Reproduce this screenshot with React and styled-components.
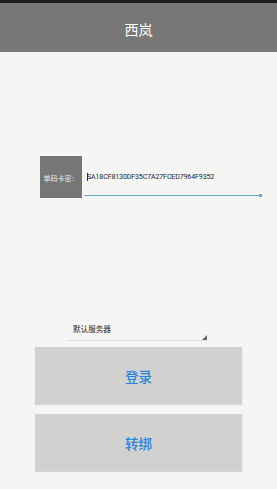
import React from "react";
import styled, { createGlobalStyle } from "styled-components";

const GlobalStyle = createGlobalStyle`
  html, body {
    margin: 0;
    padding: 0;
    background: #f5f5f3;
  }
  body {
    font-family: Roboto, "Noto Sans CJK SC", sans-serif;
  }
`;

const Screen = styled.div`
  width: 277px;
  height: 489px;
  background: #f5f5f3;
  display: flex;
  flex-direction: column;
  overflow: hidden;
`;

const StatusBar = styled.div`
  height: 3px;
  background: #1c1c1b;
`;

const TitleBar = styled.header`
  height: 49px;
  background: #777775;
  color: #ffffff;
  display: flex;
  align-items: center;
  justify-content: center;
  font-size: 14px;
  padding-top: 2px;
  box-sizing: border-box;
`;

const Body = styled.main`
  flex: 1;
  display: flex;
  flex-direction: column;
  padding: 104px 35px 0 35px;
`;

const InputRow = styled.div`
  display: flex;
  align-items: stretch;
  height: 42px;
  margin-left: 5px;
  margin-right: -20px;
`;

const Label = styled.div`
  width: 42px;
  background: #767674;
  color: #ececea;
  font-size: 7px;
  display: flex;
  align-items: center;
  justify-content: center;
  padding-top: 2px;
  box-sizing: border-box;
  white-space: nowrap;
`;

const Field = styled.div`
  flex: 1;
  margin-left: 2px;
  margin-bottom: 2px;
  display: flex;
  align-items: center;
  padding-left: 3px;
  padding-top: 2px;
  border-bottom: 1.5px solid #62a9c6;
  font-size: 7px;
  color: #1e1e1e;
  letter-spacing: -0.1px;
  position: relative;
  &::after {
    content: "";
    position: absolute;
    right: 0;
    bottom: -1.5px;
    width: 3px;
    height: 3px;
    background: #62a9c6;
  }
`;

const Caret = styled.span`
  display: inline-block;
  width: 1px;
  height: 8px;
  background: #333;
  margin-right: -1px;
`;

const Spinner = styled.div`
  margin: 118px 35px 0 33px;
  height: 24px;
  display: flex;
  align-items: center;
  padding-left: 5px;
  font-size: 7.6px;
  color: #222222;
  border-bottom: 1px solid #dcdcda;
  position: relative;
`;

const Arrow = styled.span`
  position: absolute;
  right: 0;
  bottom: 0;
  width: 0;
  height: 0;
  border-left: 5px solid transparent;
  border-bottom: 5px solid #666664;
`;

const ActionButton = styled.button`
  height: ${(p) => p.$h}px;
  margin-top: ${(p) => p.$top}px;
  border: none;
  background: #d1d1cf;
  color: #2684dc;
  font-family: "Noto Sans CJK SC", sans-serif;
  font-size: 13.5px;
  font-weight: 500;
  padding: 0;
  display: flex;
  align-items: center;
  justify-content: center;
  box-shadow: 0 1px 1px rgba(0, 0, 0, 0.12);
`;

export default function App() {
  return (
    <>
      <GlobalStyle />
      <Screen>
        <StatusBar />
        <TitleBar>西岚</TitleBar>
        <Body>
          <InputRow>
            <Label>单码卡密：</Label>
            <Field>
              <Caret />
              SA18CF8130DF35C7A27FCED7964F9352
            </Field>
          </InputRow>
          <Spinner>
            默认服务器
            <Arrow />
          </Spinner>
          <ActionButton $h={57} $top={6}>登录</ActionButton>
          <ActionButton $h={57} $top={10}>转绑</ActionButton>
        </Body>
      </Screen>
    </>
  );
}
